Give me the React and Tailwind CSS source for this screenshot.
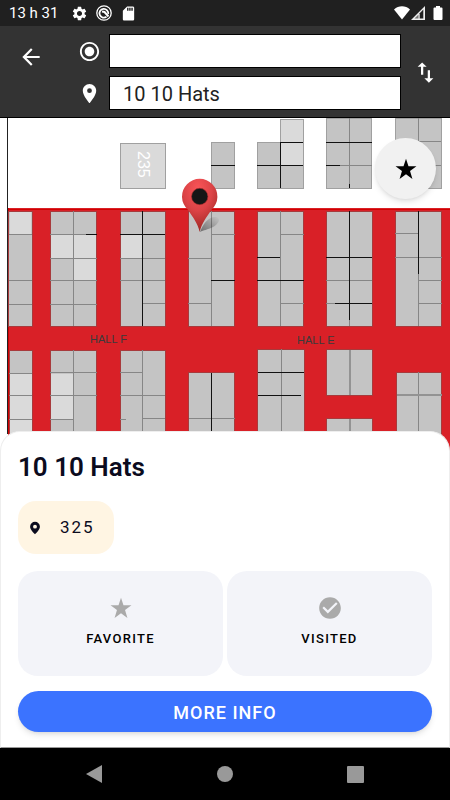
import { MdArrowBack, MdCheckCircle, MdPlace, MdRadioButtonChecked, MdSdCard, MdSettings, MdSwapVert } from 'react-icons/md';

const GREY = '#c4c4c4';
const LIGHT = '#dadada';

// x, y, width, height of every block of stands
const blocks = [
  [211, 142, 23, 46], [257, 142, 23, 46], [280, 119, 23, 69], [326, 118, 45, 70], [395, 118, 46, 70],
  [8, 211, 24, 115], [50, 211, 46, 115], [120, 211, 45, 115], [188, 211, 46, 115], [257, 211, 46, 115],
  [326, 211, 46, 115], [395, 211, 46, 115],
  [9, 350, 23, 110], [50, 350, 46, 110], [120, 350, 45, 110], [188, 372, 46, 87], [257, 349, 47, 111],
  [326, 349, 46, 46], [326, 418, 46, 42], [396, 372, 45, 88],
];

const lightStands = [
  [120, 143, 45, 45], [280, 119, 23, 23], [280, 142, 23, 23],
  [9, 211, 22, 24], [50, 234, 23, 24], [73, 234, 23, 24], [73, 258, 23, 22], [120, 234, 22, 24],
  [9, 373, 23, 22], [9, 395, 23, 24], [9, 419, 23, 40], [50, 373, 23, 22], [50, 395, 23, 24],
];

const blackWalls =
  'M211 165.5h24M257 165.5h46M280 142.5h23M280.5 142v46M326 142.5h46M326 165.5h14M349.5 184v4' +
  'M86 234.5h11M120 234.5h45M142.5 211v115M211 280.5h24M257 257.5h23M257 280.5h47M326 257.5h46M349.5 211v109' +
  'M335 303.5h37M418.5 211v63M258 372.5h46M258 395.5h43M211.5 373v87';

const greyWalls =
  'M349.5 118v66M340 165.5h32M395 141.5h46M395 165.5h46M418.5 118v70' +
  'M9 234.5h23M9 280.5h23M9 304.5h23M50 234.5h47M50 258.5h47M50 280.5h47M50 304.5h47M73.5 211v115' +
  'M120 258.5h45M120 280.5h45M143 303.5h22M188 258.5h23M188 303.5h23M211.5 211v115M211 234.5h24' +
  'M280.5 211v115M280 234.5h24M280 303.5h24M349.5 320v6M326 280.5h46M326 303.5h9' +
  'M395 233.5h23M395 257.5h47M418 280.5h24M418 303.5h24M418.5 274v52' +
  'M9 373.5h23M9 395.5h23M9 419.5h23M50 372.5h47M50 395.5h47M50 419.5h23M73.5 350v110' +
  'M120 372.5h22M120 395.5h45M120 419.5h6M142 418.5h23M142.5 350v110M189 418.5h46' +
  'M281.5 349v111M418.5 372v88';

function FloorPlan() {
  return (
    <svg viewBox="0 118 450 334" preserveAspectRatio="xMinYMin slice" className="absolute inset-0 size-full" aria-label="Floor plan">
      <defs>
        <radialGradient id="pin" cx="0.45" cy="0.2" r="0.8">
          <stop offset="0" stopColor="#fa5558" />
          <stop offset="0.5" stopColor="#dc4346" />
          <stop offset="1" stopColor="#9c2622" />
        </radialGradient>
        <linearGradient id="pinShadow" x1="0" y1="1" x2="1" y2="0">
          <stop offset="0" stopColor="#000" stopOpacity="0.45" />
          <stop offset="1" stopColor="#000" stopOpacity="0" />
        </linearGradient>
      </defs>
      <rect x="8" y="208" width="442" height="260" fill="#d92027" />
      <path d="M8 209.5h442M8.5 208v250" stroke="#d00000" />
      {blocks.map(([x, y, w, h]) => (
        <rect key={`${x}-${y}`} x={x + 0.5} y={y + 0.5} width={w} height={h} fill={GREY} stroke={y > 200 ? '#a83a3c' : '#a0a0a0'} />
      ))}
      <rect x="120.5" y="143.5" width="45" height="45" fill="none" stroke="#a0a0a0" />
      {lightStands.map(([x, y, w, h]) => (
        <rect key={`${x}-${y}`} x={x + 1} y={y + 1} width={w - 1} height={h - 1} fill={LIGHT} />
      ))}
      <path d={greyWalls} stroke="#868686" />
      <path d={blackWalls} stroke="#111" />
      <path d="M350 350v45M350 419v40M397 395h45" stroke="#939393" strokeWidth="2" />
      <path d="M7.5 118v316" stroke="#222" />
      <g className="font-['Liberation_Sans',sans-serif]">
        <text x="90" y="343" fontSize="11" fill="#3b3b3b">HALL F</text>
        <text x="297" y="344" fontSize="11" fill="#3b3b3b">HALL E</text>
        <text transform="translate(138 151) rotate(90)" fontSize="16" fill="#fff">235</text>
      </g>
      <path d="M200 232c3-8 8-15 15-15s4 7-2 10-9 3-13 5z" fill="url(#pinShadow)" />
      <path d="M199.700 232c-2-9-7-15-12-22.500a17.700 17.700 0 1 1 24 0c-5 7.500-10 13.500-12 22.500z" fill="url(#pin)" />
      <circle cx="199.700" cy="196.500" r="8.200" fill="#161616" stroke="#a82c2c" strokeWidth="0.600" />
    </svg>
  );
}

function Star({ className }) {
  return (
    <svg viewBox="0 0 24 24" fill="currentColor" className={className}>
      <path d="M12 .8l2.700 8.300h8.700l-7 5.200 2.600 8.500-7-5.200-7 5.200 2.600-8.500-7-5.200h8.700z" />
    </svg>
  );
}

function StatusBar() {
  return (
    <div className="flex h-[26px] items-center justify-between bg-[#202020] pr-[7px] pl-[9px] text-white">
      <div className="flex items-center">
        <span className="w-[62px] text-[15px] leading-[26px]">13 h 31</span>
        <MdSettings size={17} />
        <svg viewBox="0 0 16 16" className="ml-2 size-4" fill="none" stroke="currentColor">
          <circle cx="8" cy="8" r="7.200" strokeWidth="1.300" />
          <path d="M10.500 11.800A4.400 4.400 0 1 1 12.200 9" strokeWidth="1.800" />
          <path d="M6 6.500l2.500.5 4 4.500" strokeWidth="2" />
        </svg>
        <MdSdCard size={17} className="ml-2" />
      </div>
      <div className="flex items-center">
        <svg viewBox="0 0 16 14" className="h-[14px] w-4" fill="currentColor">
          <path d="M0 3.500C4.500-.7 11.500-.7 16 3.500L8 13.500z" />
        </svg>
        <svg viewBox="0 0 14 14" className="ml-px size-[14px]">
          <path d="M0 14L14 0v14z" fill="#eee" />
          <path d="M3.500 12.600L7.500 8.600v4z" fill="#777" />
          <path d="M8.700 12.600V7.200l3.600-3.600v9z" fill="#202020" />
        </svg>
        <svg viewBox="0 0 10 14" className="ml-2 h-[14px] w-[10px]" fill="currentColor">
          <path d="M3 0h4v1.500h1.500a1 1 0 0 1 1 1V13a1 1 0 0 1-1 1h-7a1 1 0 0 1-1-1V2.500a1 1 0 0 1 1-1H3z" />
        </svg>
      </div>
    </div>
  );
}

function RouteHeader() {
  const field = 'h-[34px] w-full min-w-0 border border-black bg-white px-[13px] pt-px text-[20px] text-[#222] outline-none';
  return (
    <header className="flex border-b border-black bg-[#333] pt-2 pb-[7px] text-white">
      <button type="button" aria-label="Back" className="flex h-[46px] w-[62px] items-center justify-center">
        <MdArrowBack size={26} />
      </button>
      <div className="flex min-w-0 flex-1 flex-col gap-2">
        <label className="flex items-center">
          <span className="flex w-[47px] shrink-0 justify-center pl-2"><MdRadioButtonChecked size={23} /></span>
          <input type="text" aria-label="From" className={field} />
        </label>
        <label className="flex items-center">
          <span className="flex w-[47px] shrink-0 justify-center pl-2"><MdPlace size={23} /></span>
          <input type="text" aria-label="To" defaultValue="10 10 Hats" className={field} />
        </label>
      </div>
      <button type="button" aria-label="Swap" className="flex w-[49px] items-center justify-center">
        <MdSwapVert size={27} />
      </button>
    </header>
  );
}

function ActionCard({ icon, label }) {
  return (
    <button type="button" className="flex h-[105px] flex-col items-center justify-center gap-[9px] rounded-[20px] bg-[#f3f4f9] pb-0.5">
      <span className="flex h-6 items-center text-[#aaa]">{icon}</span>
      <span className="text-[13px] leading-5 font-medium tracking-widest text-black">{label}</span>
    </button>
  );
}

function DetailSheet() {
  return (
    <section className="relative -mt-5 rounded-t-[20px] border border-[#eee] border-b-[#999] bg-white px-[17px] pt-[19px] pb-[15px]">
      <h1 className="text-[26px] leading-8 font-semibold text-[#0b0b1e]">10 10 Hats</h1>
      <div className="mt-[18px] flex h-[53px] w-24 items-center rounded-[18px] bg-[#fff5e3] pl-[10px] text-[#0b0b1e]">
        <svg viewBox="0 0 14 18" className="h-[14px] w-[14px]" fill="currentColor" fillRule="evenodd">
          <path d="M7 1a6.300 6.300 0 0 0-6.300 6.300C.7 11.500 7 17 7 17s6.300-5.500 6.300-9.700A6.300 6.300 0 0 0 7 1zm0 3.800a2.500 2.500 0 1 1 0 5 2.500 2.500 0 0 1 0-5z" />
        </svg>
        <span className="ml-[18px] pt-px text-[17px] tracking-[2px]">325</span>
      </div>
      <div className="mt-[17px] grid grid-cols-2 gap-1">
        <ActionCard icon={<Star className="size-[22px]" />} label="FAVORITE" />
        <ActionCard icon={<MdCheckCircle size={26} />} label="VISITED" />
      </div>
      <button
        type="button"
        className="mt-[15px] block h-[41px] w-full rounded-full bg-[#3b73ff] pt-px text-[18px] font-medium tracking-[1px] text-white shadow-md"
      >
        MORE INFO
      </button>
    </section>
  );
}

function NavigationBar() {
  return (
    <nav className="grid h-[52px] grid-cols-3 place-items-center bg-black px-[30px] text-[#999]">
      <button type="button" aria-label="Back">
        <svg viewBox="0 0 18 18" className="size-[18px]" fill="currentColor"><path d="M0 9L16 0v18z" /></svg>
      </button>
      <button type="button" aria-label="Home" className="size-4 rounded-full bg-[#999]" />
      <button type="button" aria-label="Recent apps" className="size-[17px] rounded-[1px] bg-[#999]" />
    </nav>
  );
}

export default function App() {
  return (
    <div className="flex min-h-screen flex-col bg-white font-[Roboto,sans-serif]">
      <StatusBar />
      <RouteHeader />
      <main className="flex flex-1 flex-col">
        <div className="relative min-h-[200px] flex-1 overflow-hidden bg-white">
          <FloorPlan />
          <button
            type="button"
            aria-label="Favorites"
            className="absolute top-5 right-[14px] flex size-[61px] items-center justify-center rounded-full bg-[#f1f1f1] text-black shadow-md"
          >
            <Star className="size-[22px]" />
          </button>
        </div>
        <DetailSheet />
      </main>
      <NavigationBar />
    </div>
  );
}
